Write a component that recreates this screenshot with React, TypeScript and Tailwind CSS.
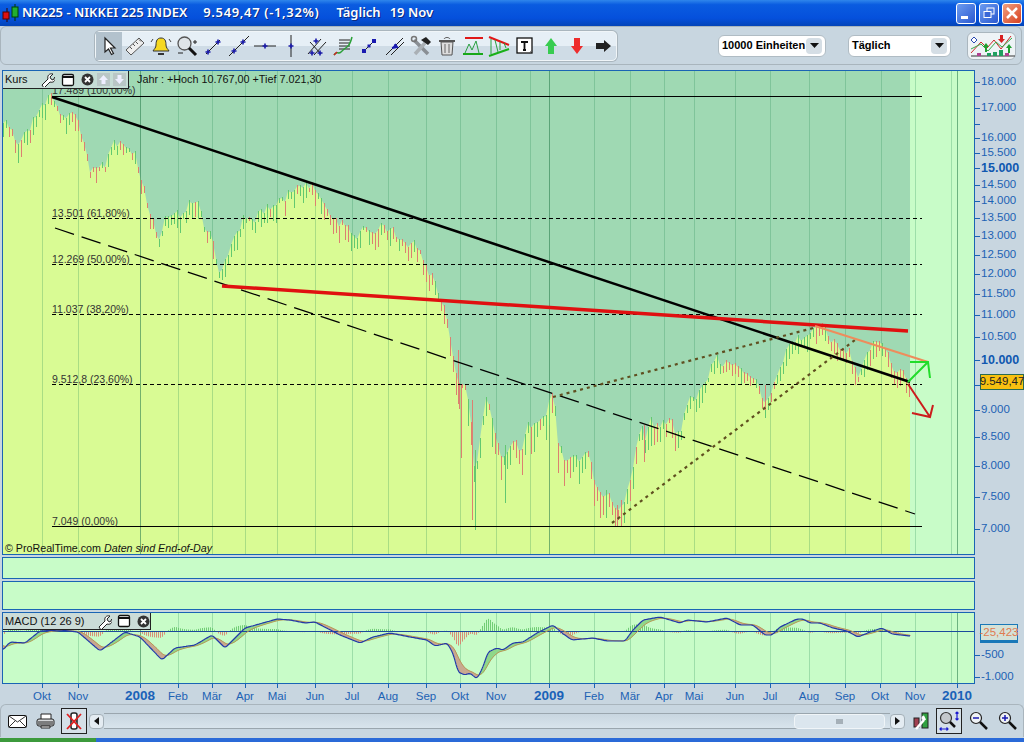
import type { ReactNode } from "react";

const priceEnvelope: [number, number][] = [
  [3,128],[8,122],[13,130],[18,148],[25,140],[32,120],[40,108],[48,100],[52,97],[58,110],[62,124],[70,118],[75,116],[80,132],[85,150],[90,165],[95,158],[100,166],[106,160],[112,148],[118,136],[125,146],[135,150],[140,176],[146,192],[155,226],[160,246],[165,216],[175,216],[185,206],[197,200],[205,226],[213,240],[220,284],[225,262],[235,236],[245,222],[255,222],[265,210],[280,198],[290,195],[300,190],[315,186],[325,200],[335,215],[345,226],[355,236],[370,224],[385,230],[400,236],[415,246],[425,262],[435,290],[445,310],[452,350],[458,392],[464,388],[470,402],[475,480],[478,450],[487,390],[492,420],[500,450],[505,462],[508,445],[515,440],[520,462],[527,430],[535,425],[545,425],[552,395],[555,410],[558,440],[563,450],[568,470],[575,460],[580,465],[588,455],[593,475],[600,490],[605,500],[610,495],[615,510],[620,514],[625,505],[630,480],[633,465],[638,435],[642,425],[645,440],[650,425],[660,430],[670,425],[680,435],[690,400],[700,390],[710,375],[720,360],[730,365],[745,375],[755,385],[765,405],[775,385],[790,345],[805,335],[815,325],[825,335],[835,345],[850,350],[858,375],[865,355],[875,345],[885,355],[895,370],[905,378],[910,382],
];

const macdPoints: [number, number][] = [
  [3,650],[10,642],[25,643],[40,631],[60,630],[78,632],[100,651],[125,632],[140,637],[162,660],[175,648],[195,645],[212,635],[225,648],[245,628],[277,619],[290,620],[305,623],[315,622],[340,635],[360,643],[373,637],[390,633],[410,637],[427,640],[435,646],[447,643],[453,653],[458,672],[465,675],[470,673],[477,679],[483,667],[488,652],[497,648],[503,650],[513,643],[523,642],[537,633],[553,625],[562,633],[572,640],[593,638],[607,641],[625,641],[633,630],[643,620],[660,617],[680,623],[687,620],[707,622],[727,618],[740,625],[753,625],[765,635],[772,635],[780,627],[797,619],[803,619],[810,623],[820,623],[833,628],[847,631],[858,637],[870,632],[882,628],[892,634],[910,636],
];

const gridLines = [42, 78, 178, 212, 245, 277, 315, 352, 388, 426, 460, 496, 530, 594, 630, 664, 694, 735, 770, 809, 845, 881, 915, 951];
const yearLines = [140, 549, 957];

// long wicks that the envelope alone does not give
const spikes: { x: number; from: number; to: number; green: boolean }[] = [
  { x: 458, from: 350, to: 404, green: false },
  { x: 461, from: 385, to: 458, green: false },
  { x: 472, from: 400, to: 520, green: false },
  { x: 475, from: 450, to: 530, green: true },
  { x: 505, from: 445, to: 503, green: true },
  { x: 617, from: 505, to: 527, green: false },
  { x: 621, from: 500, to: 527, green: false },
  { x: 606, from: 490, to: 518, green: true },
  { x: 644, from: 425, to: 462, green: false },
  { x: 765, from: 385, to: 410, green: false },
];

const priceTicks = [
  { label: "18.000", y: 82 }, { y: 96 }, { label: "17.000", y: 108 }, { y: 124 }, { label: "16.000", y: 138 },
  { label: "15.500", y: 153 }, { label: "15.000", y: 168, bold: true }, { label: "14.500", y: 185 }, { label: "14.000", y: 201 },
  { label: "13.500", y: 218 }, { label: "13.000", y: 236 }, { label: "12.500", y: 255 }, { label: "12.000", y: 274 },
  { label: "11.500", y: 294 }, { label: "11.000", y: 315 }, { label: "10.500", y: 337 }, { label: "10.000", y: 360, bold: true },
  { y: 385 }, { label: "9.000", y: 410 }, { label: "8.500", y: 437 }, { label: "8.000", y: 466 }, { label: "7.500", y: 497 }, { label: "7.000", y: 529 },
];

const timeLabels = [
  { label: "Okt", x: 42 }, { label: "Nov", x: 78 }, { label: "2008", x: 140, bold: true }, { label: "Feb", x: 178 }, { label: "Mär", x: 212 },
  { label: "Apr", x: 245 }, { label: "Mai", x: 277 }, { label: "Jun", x: 315 }, { label: "Jul", x: 352 }, { label: "Aug", x: 388 },
  { label: "Sep", x: 426 }, { label: "Okt", x: 460 }, { label: "Nov", x: 496 }, { label: "2009", x: 549, bold: true }, { label: "Feb", x: 594 },
  { label: "Mär", x: 630 }, { label: "Apr", x: 664 }, { label: "Mai", x: 694 }, { label: "Jun", x: 735 }, { label: "Jul", x: 770 },
  { label: "Aug", x: 809 }, { label: "Sep", x: 845 }, { label: "Okt", x: 880 }, { label: "Nov", x: 915 }, { label: "2010", x: 957, bold: true },
];

const fibLabels = [
  { text: "17.489 (100,00%)", y: 94 }, { text: "13.501 (61,80%)", y: 217 }, { text: "12.269 (50,00%)", y: 263 },
  { text: "11.037 (38,20%)", y: 313 }, { text: "9.512,8 (23,60%)", y: 383 }, { text: "7.049 (0,00%)", y: 525 },
];

function noise(i: number) {
  const s = Math.sin(i * 12.9898) * 43758.5453;
  return s - Math.floor(s);
}

function interpolate(points: [number, number][], x: number) {
  for (let i = 1; i < points.length; i++) {
    if (x <= points[i][0]) {
      const [x0, y0] = points[i - 1];
      const [x1, y1] = points[i];
      return y0 + ((y1 - y0) * (x - x0)) / (x1 - x0);
    }
  }
  return points[points.length - 1][1];
}

const boundary: [number, number][] = [];
for (let x = 3; x <= 910; x += 3) {
  const slow = noise(Math.floor(x / 9)) - 0.5;
  const jag = (noise(x) - 0.5) * 9;
  const size = x > 905 ? 0 : 1;
  boundary.push([x, interpolate(priceEnvelope, x) + (slow * 10 + jag) * size]);
}

const macdSeries = (() => {
  let signal = 645;
  const out: { x: number; macd: number; signal: number }[] = [];
  for (let x = 3; x <= 910; x += 1) {
    let sum = 0;
    for (let k = -2; k <= 2; k++) sum += interpolate(macdPoints, Math.max(3, x + k));
    const macd = sum / 5;
    signal += (macd - signal) * 0.14;
    out.push({ x, macd, signal });
  }
  return out;
})();

function PriceChart() {
  const above = `3,71 ${boundary.map(([x, y]) => `${x},${y.toFixed(1)}`).join(" ")} 910,382 910,71`;
  return (
    <svg className="block" width={971} height={483} viewBox="3 71 971 483">
      <rect x="3" y="71" width="971" height="483" fill="#c8fcc8" />
      <rect x="3" y="71" width="907" height="483" fill="#d9fb94" />
      <polygon points={above} fill="#9fd9b3" />
      {gridLines.map((x) => (
        <line key={x} x1={x + 0.5} x2={x + 0.5} y1="71" y2="554" stroke="#2f8f5a" strokeOpacity="0.28" />
      ))}
      {yearLines.map((x) => (
        <line key={x} x1={x + 0.5} x2={x + 0.5} y1="71" y2="554" stroke="#2f8050" strokeOpacity="0.6" />
      ))}
      {boundary.map(([x, y], i) => {
        const rising = interpolate(priceEnvelope, x + 5) < interpolate(priceEnvelope, x - 5);
        const green = noise(i + 7) < (rising ? 0.82 : 0.2);
        const wild = x > 450 && x < 660 ? 26 : 15;
        return (
          <line
            key={x}
            x1={x + 0.5}
            x2={x + 0.5}
            y1={y - 1}
            y2={y + 3 + noise(i + 31) * wild}
            stroke={green ? "#62c870" : "#dc8070"}
            shapeRendering="crispEdges"
          />
        );
      })}
      {spikes.map((s) => (
        <line key={s.x} x1={s.x + 0.5} x2={s.x + 0.5} y1={s.from} y2={s.to} stroke={s.green ? "#62c870" : "#dc8070"} shapeRendering="crispEdges" />
      ))}
      <line x1="52" x2="922" y1="96.5" y2="96.5" stroke="#000" />
      <line x1="52" x2="922" y1="526.5" y2="526.5" stroke="#000" />
      {[218.5, 264.5, 314.5, 384.5].map((y) => (
        <line key={y} x1="52" x2="922" y1={y} y2={y} stroke="#000" strokeDasharray="4 3" />
      ))}
      <line x1="55" y1="228" x2="915" y2="514" stroke="#000" strokeWidth="1.3" strokeDasharray="20 8" />
      <line x1="52" y1="97" x2="910" y2="382" stroke="#000" strokeWidth="2.5" />
      <line x1="553" y1="397" x2="817" y2="327" stroke="#5f4f20" strokeWidth="2.2" strokeDasharray="3 4" />
      <line x1="612" y1="523" x2="855" y2="340" stroke="#5f4f20" strokeWidth="2.2" strokeDasharray="3 4" />
      <line x1="222" y1="286" x2="908" y2="331" stroke="#e01010" strokeWidth="3.5" />
      <line x1="815" y1="326" x2="928" y2="362" stroke="#ee8c5c" strokeWidth="2" />
      <path d="M908 382 L928 362 M910 362 L928 362 L930 378" fill="none" stroke="#22dd2a" strokeWidth="2" />
      <path d="M908 384 L930 417 M912 413 L930 417 L933 405" fill="none" stroke="#cc1c1c" strokeWidth="2" />
      {fibLabels.map((f) => (
        <text key={f.text} x="52" y={f.y} fontSize="10.5" fontFamily="Liberation Sans, sans-serif" fill="#333">
          {f.text}
        </text>
      ))}
      <text x="137" y="83" fontSize="10.8" fontFamily="Liberation Sans, sans-serif" fill="#111">
        Jahr : +Hoch 10.767,00 +Tief 7.021,30
      </text>
      <text x="5" y="552" fontSize="10.7" fontFamily="Liberation Sans, sans-serif" fill="#111">
        © ProRealTime.com
      </text>
      <text x="104" y="552" fontSize="10.7" fontStyle="italic" fontFamily="Liberation Sans, sans-serif" fill="#111">
        Daten sind End-of-Day
      </text>
    </svg>
  );
}

function MacdChart() {
  const macdLine = macdSeries.map((p) => `${p.x},${p.macd.toFixed(1)}`).join(" ");
  const signalLine = macdSeries.map((p) => `${p.x},${p.signal.toFixed(1)}`).join(" ");
  return (
    <svg className="block" width={971} height={70} viewBox="3 613 971 70">
      <rect x="3" y="613" width="971" height="70" fill="#c8fcc8" />
      {gridLines.map((x) => (
        <line key={x} x1={x + 0.5} x2={x + 0.5} y1="613" y2="683" stroke="#2f8f5a" strokeOpacity="0.28" />
      ))}
      {yearLines.map((x) => (
        <line key={x} x1={x + 0.5} x2={x + 0.5} y1="613" y2="683" stroke="#2f8050" strokeOpacity="0.6" />
      ))}
      {macdSeries.filter((p) => p.x % 2 === 0).map((p) => {
        const h = (p.signal - p.macd) * 1.1;
        return (
          <line
            key={`h${p.x}`}
            x1={p.x + 0.5}
            x2={p.x + 0.5}
            y1="631"
            y2={631 - h}
            stroke={h > 0 ? "#62c466" : "#dc7a68"}
            strokeOpacity="0.85"
          />
        );
      })}
      {macdSeries.map((p) => (
        <line
          key={`f${p.x}`}
          x1={p.x + 0.5}
          x2={p.x + 0.5}
          y1={p.macd}
          y2={p.signal}
          stroke={p.macd > p.signal ? "#c8a890" : "#8fd88a"}
        />
      ))}
      <line x1="3" x2="974" y1="631.5" y2="631.5" stroke="#1a4a9c" />
      <polyline points={signalLine} fill="none" stroke="#b89a58" />
      <polyline points={macdLine} fill="none" stroke="#2238a8" strokeWidth="1.2" />
    </svg>
  );
}

function Ico({ children, w = 22, h = 22 }: { children: ReactNode; w?: number; h?: number }) {
  return (
    <svg width={w} height={h} viewBox={`0 0 ${w} ${h}`} fill="none">
      {children}
    </svg>
  );
}

const Cross = ({ x, y }: { x: number; y: number }) => (
  <path d={`M${x - 2.5} ${y}h5M${x} ${y - 2.5}v5`} stroke="#1a1aa8" strokeWidth="1.6" />
);

const toolIcons: ReactNode[] = [
  <Ico key="cursor"><path d="M7 3v14l3.5-3 3 5.5 2-1-3-5.5h4.5z" fill="#fff" stroke="#222" strokeWidth="1.2" /></Ico>,
  <Ico key="ruler"><path d="M2 15 15 3l5 5L7 20z" fill="#eee" stroke="#555" /><path d="M6 12l2 2M9 9l2 2M12 7l2 2M15 4.500l2 2" stroke="#555" /></Ico>,
  <Ico key="bell"><path d="M11 3c4 0 5 3 5 7 0 3 2 4 3 6H3c1-2 3-3 3-6 0-4 1-7 5-7z" fill="#f6d820" stroke="#333" /><path d="M8 19h6" stroke="#333" strokeWidth="2" /><path d="M1 7l2-3M21 7l-2-3" stroke="#444" /></Ico>,
  <Ico key="zoom"><circle cx="8.500" cy="8.500" r="6.500" fill="#dfe4e8" stroke="#555" strokeWidth="1.3" /><path d="M13 13l7 7" stroke="#111" strokeWidth="3" /><path d="M17 7h4M19 5v4M2 18h5" stroke="#222" /></Ico>,
  <Ico key="seg"><path d="M4 19 18 5" stroke="#222" /><Cross x={6} y={17} /><Cross x={16} y={7} /></Ico>,
  <Ico key="ray"><path d="M1 21 21 1" stroke="#222" /><Cross x={6} y={16} /><Cross x={15} y={7} /></Ico>,
  <Ico key="hline"><path d="M0 11h22" stroke="#222" /><Cross x={11} y={11} /></Ico>,
  <Ico key="vline"><path d="M11 0v22" stroke="#222" /><Cross x={11} y={11} /></Ico>,
  <Ico key="chan"><path d="M2 19 15 4M8 20 20 7M4 7l11 12" stroke="#222" /><Cross x={6} y={18} /><Cross x={14} y={18} /><Cross x={10} y={6} /></Ico>,
  <Ico key="fib"><path d="M7 5h11M7 8h11M7 11h11M7 14h11" stroke="#222" /><path d="M2 20c3-5 4 0 7-3s3-3 6-5 4-6 5-10" stroke="#2aa038" strokeWidth="1.5" /><path d="M2 20l3-3" stroke="#d02020" strokeWidth="1.5" /></Ico>,
  <Ico key="diag"><path d="M6 16 16 6" stroke="#222" /><rect x="4" y="14" width="4" height="4" fill="#1a1ab0" /><rect x="14" y="4" width="4" height="4" fill="#1a1ab0" /><rect x="9.500" y="9.500" width="3" height="3" fill="#1a1ab0" /></Ico>,
  <Ico key="par"><path d="M2 20 19 3M7 20 20 7" stroke="#222" /><path d="M8 13l5-1-2-3" fill="#1a1ab0" stroke="#1a1ab0" strokeWidth="2" /></Ico>,
  <Ico key="tools"><path d="M4 5l14 14" stroke="#8a8f94" strokeWidth="3.500" /><path d="M5 19 15 8" stroke="#aab0b5" strokeWidth="3.500" /><path d="M11 5l5-3 5 5-3 3z" fill="#222" /><circle cx="4" cy="4" r="2.500" stroke="#777" strokeWidth="1.500" /></Ico>,
  <Ico key="trash"><path d="M3 6h16" stroke="#555" strokeWidth="2" /><path d="M8 4c1-2 5-2 6 0" stroke="#555" /><path d="M5 7l1 13h10l1-13z" fill="#ddd" stroke="#555" /><path d="M9 9v9M13 9v9" stroke="#666" /></Ico>,
  <Ico key="chanp"><path d="M3 3h18" stroke="#e01818" strokeWidth="2" /><path d="M1 19h20" stroke="#18a818" strokeWidth="2" /><path d="M3 18l4-9 3 6 4-9 3 12" stroke="#28a040" /></Ico>,
  <Ico key="tri"><path d="M1 2l20 8" stroke="#e01818" strokeWidth="2" /><path d="M1 21l20-7" stroke="#18b018" strokeWidth="2" /><path d="M3 4v15M7 5l3 12M12 7v8M16 8l2 5" stroke="#28a040" /></Ico>,
  <Ico key="text"><rect x="3" y="3" width="15" height="15" fill="#fff" stroke="#111" strokeWidth="1.300" /><path d="M7 7h7M10.500 7v8M9 15h3" stroke="#111" strokeWidth="1.800" /><path d="M18 15l-3 4" stroke="#555" /></Ico>,
  <Ico key="up"><path d="M11 3l6 8h-3v8H8v-8H5z" fill="#38cc50" /></Ico>,
  <Ico key="down"><path d="M8 3h6v8h3l-6 8-6-8h3z" fill="#ee2c2c" /></Ico>,
  <Ico key="right"><path d="M4 8h8V5l7 6-7 6v-3H4z" fill="#222" /></Ico>,
];

function Dropdown({ label, className }: { label: string; className: string }) {
  return (
    <div className={`flex h-[22px] items-center justify-between rounded-md border border-[#b0bcc4] bg-white pl-[3px] pr-[3px] ${className}`}>
      <span className="whitespace-nowrap text-[11px] font-bold text-black">{label}</span>
      <span className="flex h-[16px] w-[16px] items-center justify-center rounded-sm bg-[#d5dee5]">
        <svg width="9" height="5" viewBox="0 0 9 5"><path d="M0 0h9L4.500 5z" fill="#111" /></svg>
      </span>
    </div>
  );
}

function WindowButton({ tone, children }: { tone: string; children: ReactNode }) {
  return (
    <div className={`flex h-[21px] w-[20px] items-center justify-center rounded-[3px] border border-white ${tone}`}>{children}</div>
  );
}

function TitleBar() {
  return (
    <div className="flex h-[26px] items-center bg-[linear-gradient(#2f86ec_0%,#0a5ce0_18%,#0550dc_70%,#0344b8_100%)] font-['Noto_Sans',sans-serif] text-[13px] font-semibold text-white [text-shadow:1px_1px_0_#0a2a80]">
      <svg className="ml-[2px] mr-[3px]" width="17" height="20" viewBox="0 0 17 20">
        <path d="M5 5v14" stroke="#300" />
        <rect x="1" y="9" width="6" height="7" fill="#e01010" stroke="#500" />
        <path d="M13 1v17" stroke="#030" />
        <rect x="10" y="4" width="6" height="10" fill="#22b030" stroke="#040" />
      </svg>
      <span>NK225 - NIKKEI 225 INDEX</span>
      <span className="ml-[16px] tracking-[0.65px]">9.549,47 (-1,32%)</span>
      <span className="ml-[17px]">Täglich</span>
      <span className="ml-[9px]">19 Nov</span>
      <div className="ml-auto mr-[2px] flex gap-[3px]">
        <WindowButton tone="bg-[linear-gradient(135deg,#6c9cf0,#2a58d0)]">
          <span className="mt-[9px] mr-[4px] block h-[3px] w-[7px] bg-white" />
        </WindowButton>
        <WindowButton tone="bg-[linear-gradient(135deg,#6c9cf0,#2a58d0)]">
          <svg width="12" height="12" viewBox="0 0 12 12" fill="none"><rect x="4" y="1" width="7" height="6" stroke="#fff" /><rect x="1" y="4.500" width="7" height="6" fill="#3a68d8" stroke="#fff" /></svg>
        </WindowButton>
        <WindowButton tone="bg-[linear-gradient(135deg,#f0a080,#d84020)]">
          <svg width="12" height="12" viewBox="0 0 12 12"><path d="M1 1l10 10M11 1 1 11" stroke="#fff" strokeWidth="2.500" /></svg>
        </WindowButton>
      </div>
    </div>
  );
}

function Toolbar() {
  return (
    <div className="flex h-[44px] bg-[#c8d6e0]">
      <div className="mb-[5px] flex h-[39px] w-[1022px] items-center rounded-[6px] border border-[#a9b5bd] bg-[#c8d6e0] pl-[94px]">
        <div className="flex h-[30px] w-[522px] items-center rounded-[5px] border border-[#f0f5f8] bg-[linear-gradient(#e6eff6_50%,#cfdce6_50%)] shadow-[0_0_0_1px_#aab6be]">
          {toolIcons.map((icon, i) => (
            <span key={i} className={`flex h-[28px] w-[26px] shrink-0 items-center justify-center ${i === 0 ? "bg-[#b3c2cd]" : ""}`}>
              {icon}
            </span>
          ))}
        </div>
        <Dropdown label="10000 Einheiten" className="ml-[101px] w-[108px]" />
        <Dropdown label="Täglich" className="ml-[22px] w-[103px]" />
        <div className="ml-[16px] flex h-[28px] w-[49px] items-center justify-center rounded-md border border-[#aab6be] bg-[#eef3f6]">
          <svg width="46" height="24" viewBox="0 0 46 24" fill="none">
            <path d="M2 19 12 8l6 6 7-8 7 9 10-13" stroke="#d02828" />
            <path d="M2 15l10-5 7 7 8-9 6 5 10-9" stroke="#3aa84a" />
            <path d="M5 3l3 3-3 3-3-3z" fill="#fff" stroke="#2848b0" />
            <path d="M17 9l3 4h-2v5h-2v-5h-2z" fill="#20a030" />
            <path d="M31 1h3v4h2l-3.500 4L29 5h2z" fill="#d82020" />
            <path d="M40 10l3 4h-2v5h-2v-5h-2z" fill="#20a030" />
            <path d="M2 22h44" stroke="#333" />
            <rect x="8" y="19" width="4" height="3" fill="#b04090" />
            <rect x="18" y="19" width="4" height="3" fill="#20a060" />
            <rect x="24" y="18" width="4" height="4" fill="#20a060" />
            <rect x="30" y="16" width="4" height="6" fill="#20a060" />
            <rect x="36" y="19" width="4" height="3" fill="#b04090" />
          </svg>
        </div>
      </div>
    </div>
  );
}

function Axis() {
  return (
    <div className="relative h-[485px] w-[49px] font-['Liberation_Sans',sans-serif]">
      {priceTicks.map((t) => (
        <div key={t.y} className="absolute left-0 flex h-0 items-center" style={{ top: t.y - 70 }}>
          <span className="h-px w-[5px] bg-[#1a64b4]" />
          {t.label && (
            <span className={`ml-[1px] ${t.bold ? "text-[12.5px] font-bold text-[#0f58b0]" : "text-[11.5px] text-[#1c62b4]"}`}>{t.label}</span>
          )}
        </div>
      ))}
      <div className="absolute left-[5px] top-[304px] flex h-[16px] w-[44px] items-center justify-center border border-[#2a6a50] bg-[#f8c010] text-[11.5px] text-[#222]">
        9.549,47
      </div>
    </div>
  );
}

function MacdAxis() {
  return (
    <div className="relative h-[72px] w-[49px] font-['Liberation_Sans',sans-serif] text-[11.5px] text-[#1c62b4]">
      <div className="absolute left-[5px] top-[12px] flex h-[19px] w-[38px] items-center justify-center border border-[#1a78b8] border-b-[3px] bg-[#d4e2d8] text-[11.5px] text-[#e07a50]">
        -25,423
      </div>
      {[{ label: "-500", top: 43 }, { label: "-1.000", top: 65 }].map((t) => (
        <div key={t.label} className="absolute left-0 flex h-0 items-center" style={{ top: t.top }}>
          <span className="h-px w-[5px] bg-[#1a64b4]" />
          <span className="ml-[1px]">{t.label}</span>
        </div>
      ))}
    </div>
  );
}

function TimeAxis() {
  return (
    <div className="relative h-[20px] w-full font-['Liberation_Sans',sans-serif]">
      {timeLabels.map((t) => (
        <div key={`${t.label}${t.x}`} className="absolute top-0 flex w-[40px] flex-col items-center" style={{ left: t.x - 20 }}>
          <span className="h-[4px] w-px bg-[#1a64b4]" />
          <span className={`mt-[1px] leading-[14px] ${t.bold ? "text-[13.5px] font-bold text-[#1a62b8]" : "text-[11.5px] text-[#1c62b4]"}`}>{t.label}</span>
        </div>
      ))}
    </div>
  );
}

function ScrollButton({ dir }: { dir: "l" | "r" }) {
  return (
    <span className="flex h-[15px] w-[15px] shrink-0 items-center justify-center rounded-[4px] border border-[#a4b0b8] bg-[#e4ecf2]">
      <svg width="5" height="8" viewBox="0 0 5 8">
        <path d={dir === "l" ? "M5 0v8L0 4z" : "M0 0v8l5-4z"} fill="#111" />
      </svg>
    </span>
  );
}

function MagnifierGlass({ sign }: { sign: "-" | "+" }) {
  return (
    <svg width="20" height="20" viewBox="0 0 20 20" fill="none">
      <circle cx="7" cy="7" r="5.500" fill="#eef2f5" stroke="#222" strokeWidth="1.200" />
      <path d="M11 11l7 7" stroke="#111" strokeWidth="2.500" />
      <path d={sign === "-" ? "M4 7h6" : "M4 7h6M7 4v6"} stroke="#1a1ab0" strokeWidth="1.500" />
    </svg>
  );
}

function BottomBar() {
  return (
    <div className="h-[34px] bg-[#c8d6e0]">
      <div className="flex h-[33px] items-center rounded-t-[6px] border-t border-l border-r border-[#a9b5bd]">
        <span className="ml-[7px]">
          <svg width="19" height="13" viewBox="0 0 19 13" fill="none"><rect x="0.500" y="0.500" width="18" height="12" rx="1" fill="#fff" stroke="#111" /><path d="M1 1l8.500 6L18 1M1 12l6-6M18 12l-6-6" stroke="#333" /></svg>
        </span>
        <span className="ml-[9px]">
          <svg width="19" height="16" viewBox="0 0 19 16" fill="none"><path d="M5 1h10v6H5z" fill="#fff" stroke="#222" /><rect x="1" y="6" width="17" height="7" rx="2" fill="#d5d8da" stroke="#222" /><path d="M2 9h15M2 11h15" stroke="#222" /><path d="M5 13h9v2H5z" fill="#fff" stroke="#222" /></svg>
        </span>
        <span className="ml-[6px] flex h-[26px] w-[26px] items-center justify-center border border-[#222] bg-[#d5e0e8]">
          <svg width="18" height="20" viewBox="0 0 18 20" fill="none"><rect x="6" y="2" width="6" height="16" rx="2" fill="#fff" stroke="#222" strokeWidth="1.500" /><path d="M6 10h6" stroke="#222" /><path d="M2 3l14 15M16 3 2 18" stroke="#e02020" strokeWidth="1.800" /></svg>
        </span>
        <span className="ml-[2px]"><ScrollButton dir="l" /></span>
        <div className="flex h-[16px] flex-1 items-center justify-end border-y border-[#9aa6ae] bg-[linear-gradient(#c8d6e0,#d8e4ec)]">
          <div className="mr-[5px] flex h-[15px] w-[91px] items-center justify-center rounded-[4px] border border-[#f0f5f8] bg-[#dbe6ee]">
            <span className="h-[5px] w-[7px] border-y-[2px] border-[#a5b0b8] bg-[linear-gradient(#dbe6ee_50%,#a5b0b8_50%)]" />
          </div>
        </div>
        <ScrollButton dir="r" />
        <span className="ml-[8px]">
          <svg width="16" height="20" viewBox="0 0 16 20" fill="none"><rect x="9" y="2" width="6" height="15" fill="#30a040" stroke="#222" /><rect x="1" y="7" width="5" height="9" fill="#a04050" stroke="#222" /><path d="M3 18 11 9" stroke="#fff" strokeWidth="2.500" /><path d="M11 4.500a2.500 2.500 0 1 0 2 4z" fill="#fff" /></svg>
        </span>
        <span className="ml-[7px] flex h-[26px] w-[26px] items-center justify-center border border-[#222] bg-[#d5e0e8]">
          <svg width="22" height="22" viewBox="0 0 22 22" fill="none"><circle cx="8" cy="8" r="5.500" fill="#c4c8cc" stroke="#333" strokeWidth="1.200" /><path d="M12 12l5 5" stroke="#111" strokeWidth="2.500" /><path d="M19 2v8M17.500 3.500 19 2l1.500 1.500M17.500 8.500 19 10l1.500-1.500M2 19h8M3.500 17.500 2 19l1.500 1.500M8.500 17.500 10 19l-1.500 1.500" stroke="#1a1ad0" strokeWidth="1.200" /></svg>
        </span>
        <span className="ml-[7px]"><MagnifierGlass sign="-" /></span>
        <span className="ml-[9px] mr-[5px]"><MagnifierGlass sign="+" /></span>
      </div>
    </div>
  );
}

export default function App() {
  const panel = "border border-[#1a64b4] bg-[#c8fcc8]";
  return (
    <div className="h-[742px] w-[1024px] overflow-hidden bg-[#c8d6e0] font-['Liberation_Sans',sans-serif]">
      <TitleBar />
      <Toolbar />
      <div className="flex pl-[2px]">
        <div className="flex w-[973px] flex-col">
          <div className={`relative h-[485px] ${panel}`}>
            <PriceChart />
            <div className="absolute left-0 top-0 flex h-[18px] w-[126px] items-center border-r border-b border-[#222] bg-[#c6ddd6] pl-[2px] text-[11px] text-[#111]">
              <span className="w-[35px]">Kurs</span>
              <svg width="15" height="15" viewBox="0 0 15 15" fill="none"><path d="M2 13l6-6c-1-3 1-6 5-5l-3 3 1 2 2 1 2-3c1 4-2 6-5 5l-6 6z" fill="#fff" stroke="#222" /></svg>
              <svg className="ml-[6px]" width="14" height="14" viewBox="0 0 14 14" fill="none"><rect x="1.500" y="1.500" width="11" height="11" rx="1.500" fill="#fff" stroke="#111" strokeWidth="1.300" /><path d="M2 3h10v2H2z" fill="#111" /></svg>
              <svg className="ml-[6px]" width="13" height="13" viewBox="0 0 13 13" fill="none"><circle cx="6.500" cy="6.500" r="6" fill="#333" /><path d="M4 4l5 5M9 4l-5 5" stroke="#fff" strokeWidth="1.800" /></svg>
              <span className="ml-[3px] flex h-[13px] w-[13px] items-center justify-center bg-[#b9c6c6]">
                <svg width="9" height="9" viewBox="0 0 9 9"><path d="M4.500 0 9 5H6.500v4h-4V5H0z" fill="#eef" /></svg>
              </span>
              <span className="ml-[3px] flex h-[13px] w-[13px] items-center justify-center bg-[#b9c6c6]">
                <svg width="9" height="9" viewBox="0 0 9 9"><path d="M4.500 9 9 4H6.500V0h-4v4H0z" fill="#eef" /></svg>
              </span>
            </div>
          </div>
          <div className={`mt-[2px] h-[22px] ${panel}`} />
          <div className={`mt-[2px] h-[29px] ${panel}`} />
          <div className={`relative mt-[2px] h-[72px] ${panel}`}>
            <MacdChart />
            <div className="absolute left-0 top-0 flex h-[17px] w-[148px] items-center border-r border-b border-[#222] bg-[#cbdcd8] pl-[2px] text-[11px] text-[#111]">
              <span className="w-[92px]">MACD (12 26 9)</span>
              <svg width="15" height="15" viewBox="0 0 15 15" fill="none"><path d="M2 13l6-6c-1-3 1-6 5-5l-3 3 1 2 2 1 2-3c1 4-2 6-5 5l-6 6z" fill="#fff" stroke="#222" /></svg>
              <svg className="ml-[5px]" width="14" height="14" viewBox="0 0 14 14" fill="none"><rect x="1.500" y="1.500" width="11" height="11" rx="1.500" fill="#fff" stroke="#111" strokeWidth="1.300" /><path d="M2 3h10v2H2z" fill="#111" /></svg>
              <svg className="ml-[6px]" width="13" height="13" viewBox="0 0 13 13" fill="none"><circle cx="6.500" cy="6.500" r="6" fill="#333" /><path d="M4 4l5 5M9 4l-5 5" stroke="#fff" strokeWidth="1.800" /></svg>
            </div>
          </div>
        </div>
        <div className="flex flex-col">
          <Axis />
          <div className="h-[57px]" />
          <MacdAxis />
        </div>
      </div>
      <TimeAxis />
      <BottomBar />
      <div className="flex h-[4px]">
        <div className="w-[96px] bg-[#3c9a3c]" />
        <div className="flex-1 bg-[#2a6ad8]" />
      </div>
    </div>
  );
}
